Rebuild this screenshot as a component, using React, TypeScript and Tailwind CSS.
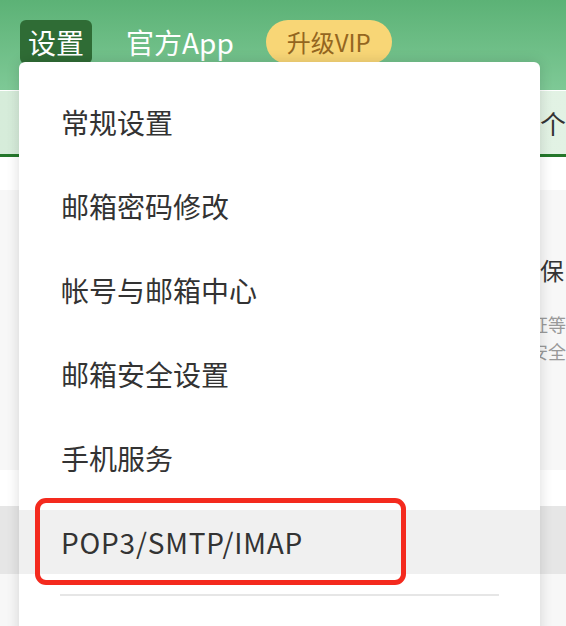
import React from "react";

const items = ["常规设置", "邮箱密码修改", "帐号与邮箱中心", "邮箱安全设置", "手机服务", "POP3/SMTP/IMAP"];

export default function App() {
  const font = { fontFamily: '"Noto Sans CJK SC", "Noto Sans", sans-serif' };
  return (
    <div className="relative w-[566px] h-[626px] overflow-hidden bg-[#f7f7f7]" style={font}>
      {/* header */}
      <div className="h-[90px] bg-gradient-to-b from-[#5cb276] to-[#7ec996] flex items-start pt-5 pl-5">
        <div className="h-[44px] px-[8px] rounded-md bg-[#2f6c35] text-white text-[28px] leading-[44px]">设置</div>
        <div className="ml-[34px] h-[44px] text-white text-[28px] leading-[44px]">官方App</div>
        <div className="ml-[32px] h-[44px] px-[21px] rounded-full bg-[#f8d676] text-[#94661f] text-[24px] leading-[44px]">升级VIP</div>
      </div>
      {/* tab bar */}
      <div className="h-[67px] border-t border-white bg-gradient-to-r from-[#d6ecda] to-[#e2f2e4] border-b-[3px] border-b-[#24772b] shadow-[0_2px_3px_rgba(0,0,0,0.12)] flex items-center pl-[540px] text-[26px] text-[#333] whitespace-nowrap overflow-hidden">
        个
      </div>
      <div className="h-[33px] bg-white" />
      <div className="h-[280px] bg-[#f7f7f7] pt-[66px] overflow-hidden">
        <div className="pl-[444px] text-[24px] leading-[28px] text-[#333] whitespace-nowrap">帐号安全保</div>
        <div className="pl-[458px] mt-[27px] text-[18px] leading-[27px] text-[#999] whitespace-nowrap">的身份验证等</div>
        <div className="pl-[458px] text-[18px] leading-[27px] text-[#999] whitespace-nowrap">保障帐号安全</div>
      </div>
      <div className="h-[36px] bg-white" />
      <div className="h-[68px] bg-[#e6e6e6]" />

      {/* dropdown */}
      <div className="absolute left-[19px] top-[62px] w-[521px] h-[600px] bg-white rounded-md shadow-[0_0_14px_rgba(0,0,0,0.14)] pt-[28px]">
        <div className="flex flex-col gap-[20px]">
          {items.map((t, i) => (
            <div
              key={t}
              className={
                "h-[64px] pl-[42px] flex items-center text-[28px] text-[#333] " +
                (i === 5 ? "bg-[#f0f0f0] tracking-[0.8px]" : "")
              }
            >
              {t}
            </div>
          ))}
        </div>
        <div className="mt-[20px] mx-[41px] h-[2px] bg-[#e6e6e6]" />
      </div>

      {/* red highlight */}
      <div className="absolute left-[35px] top-[498px] w-[371px] h-[87px] rounded-[11px] border-[5px] border-[#f42a1e]" />
    </div>
  );
}
